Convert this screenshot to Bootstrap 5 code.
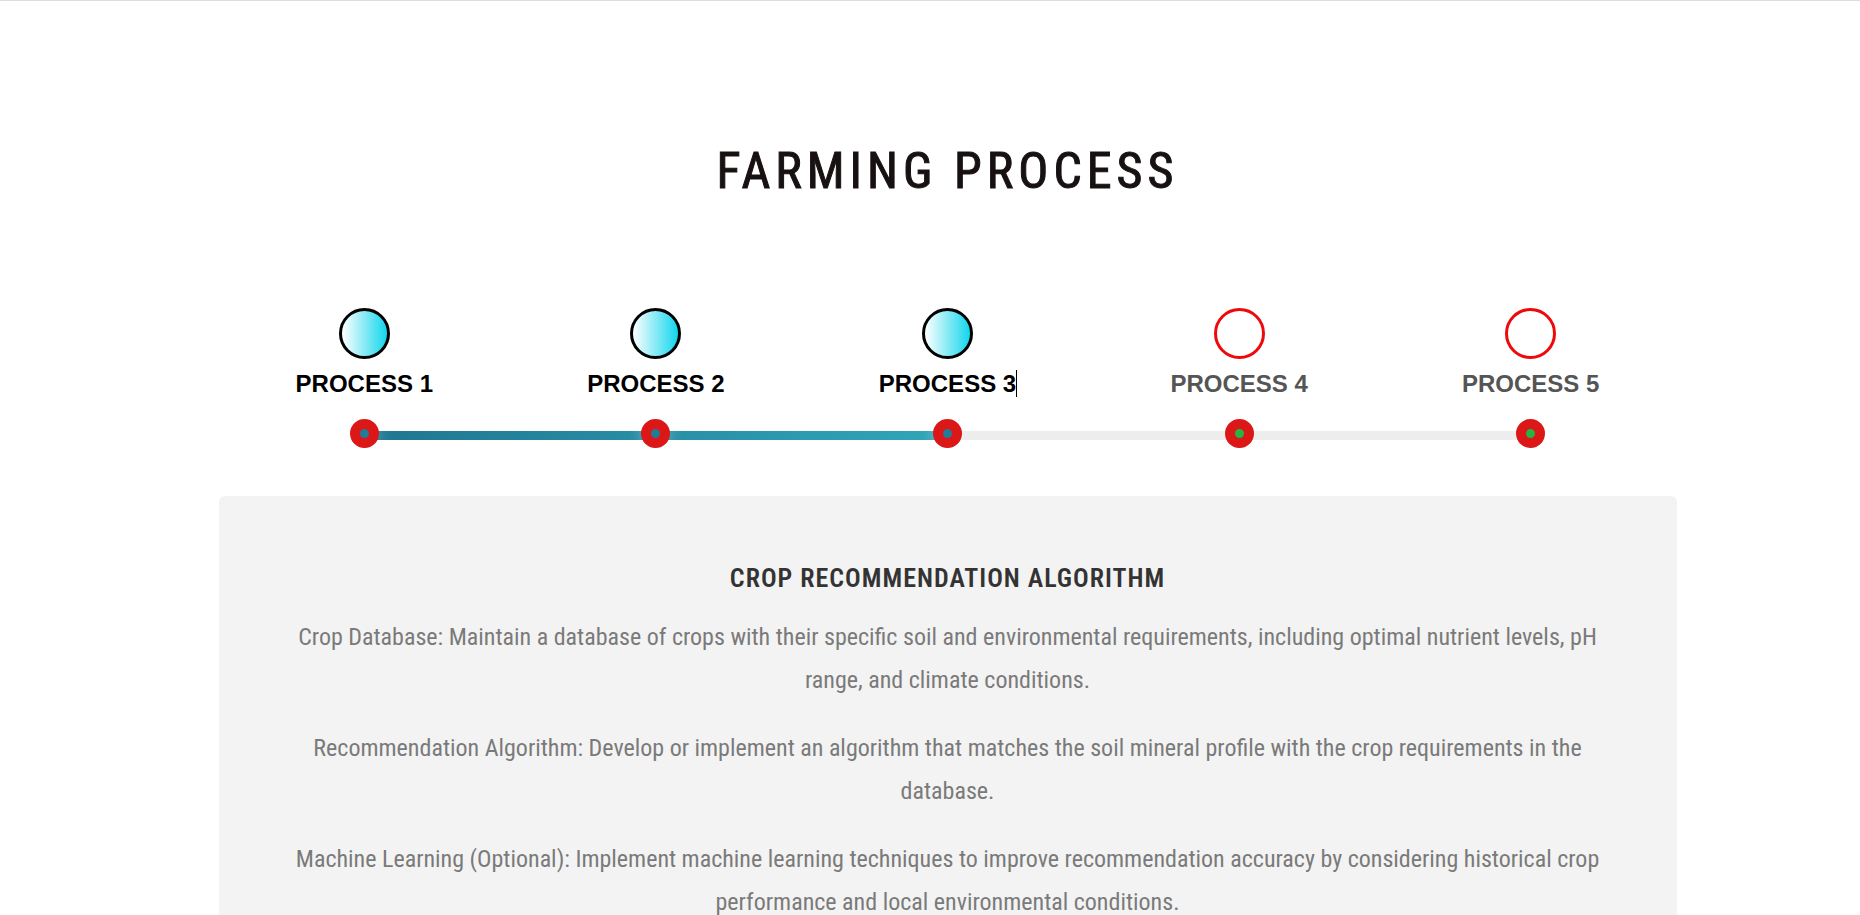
<!DOCTYPE html>
<html lang="en">
<head>
<meta charset="utf-8">
<meta name="viewport" content="width=device-width, initial-scale=1">
<title>Farming Process</title>
<link href="https://cdn.jsdelivr.net/npm/bootstrap@5.3.0/dist/css/bootstrap.min.css" rel="stylesheet">
<style>
  body { font-family: "Roboto Condensed", Roboto, sans-serif; color: #7a7a7a; }
  .process-section { padding: 140px 0 96px 35px; border-color: #ddd !important; }
  .process-wrap { max-width: 1458px; }
  .process-title { font-weight: 400; -webkit-text-stroke: 1px currentColor; font-size: 50px; line-height: 60px; letter-spacing: 5px; color: #171111; margin-bottom: 107px; }
  .steps { margin-bottom: 48px; }
  .step { flex: 1 1 0; border: 0; background: none; padding: 0; color: #555; z-index: 1; }
  .step.active { color: #000; }
  .step-icon { width: 51px; height: 51px; border: 3px solid #ee0a0a; }
  .step.active .step-icon { border-color: #000; background: linear-gradient(90deg, #fff, #12d6ec); }
  .step-label { font: 700 24px/28px "Liberation Sans", Arial, sans-serif; margin: 11px 0 21px; }
  .step-dot { width: 29px; height: 29px; border: 10px solid #dc1717; background: #20b842; box-shadow: 0 0 15px rgba(255, 255, 255, .3); }
  .step.active .step-dot { background: #207c98; }
  .caret { left: 100%; top: 0; width: 1px; height: 27px; background: #000; }
  .step-track { left: 10%; right: 10%; bottom: 8px; height: 9px; border-radius: 0; background: #ededed; }
  .step-track .progress-bar { background: linear-gradient(90deg, #1f7691, #31a6b9); }
  .process-card { background: #f3f3f3; border-radius: 6px; padding: 64px 72px; }
  .process-card h2 { font-size: 26px; line-height: 36px; letter-spacing: 1px; color: #333; margin-bottom: 20px; }
  .process-card p { font-size: 24px; line-height: 43px; margin-bottom: 25px; }
</style>
</head>
<body>
<section class="process-section border-top">
  <div class="process-wrap mx-auto text-center">
    <h1 class="process-title text-uppercase">Farming Process</h1>
    <div class="steps d-flex position-relative" role="tablist">
      <div class="step-track progress position-absolute" role="progressbar" aria-label="Progress" aria-valuenow="50" aria-valuemin="0" aria-valuemax="100"><div class="progress-bar w-50"></div></div>
      <button type="button" class="step active d-flex flex-column align-items-center" role="tab"><span class="step-icon rounded-circle"></span><span class="step-label">PROCESS 1</span><span class="step-dot rounded-circle"></span></button>
      <button type="button" class="step active d-flex flex-column align-items-center" role="tab"><span class="step-icon rounded-circle"></span><span class="step-label">PROCESS 2</span><span class="step-dot rounded-circle"></span></button>
      <button type="button" class="step active d-flex flex-column align-items-center" role="tab" aria-selected="true"><span class="step-icon rounded-circle"></span><span class="step-label position-relative">PROCESS 3<span class="caret position-absolute"></span></span><span class="step-dot rounded-circle"></span></button>
      <button type="button" class="step d-flex flex-column align-items-center" role="tab"><span class="step-icon rounded-circle"></span><span class="step-label">PROCESS 4</span><span class="step-dot rounded-circle"></span></button>
      <button type="button" class="step d-flex flex-column align-items-center" role="tab"><span class="step-icon rounded-circle"></span><span class="step-label">PROCESS 5</span><span class="step-dot rounded-circle"></span></button>
    </div>
    <div class="process-card" role="tabpanel">
      <h2 class="fw-semibold text-uppercase">Crop Recommendation Algorithm</h2>
      <p>Crop Database: Maintain a database of crops with their specific soil and environmental requirements, including optimal nutrient levels, pH range, and climate conditions.</p>
      <p>Recommendation Algorithm: Develop or implement an algorithm that matches the soil mineral profile with the crop requirements in the database.</p>
      <p>Machine Learning (Optional): Implement machine learning techniques to improve recommendation accuracy by considering historical crop performance and local environmental conditions.</p>
    </div>
  </div>
</section>
<script src="https://cdn.jsdelivr.net/npm/bootstrap@5.3.0/dist/js/bootstrap.bundle.min.js"></script>
</body>
</html>
